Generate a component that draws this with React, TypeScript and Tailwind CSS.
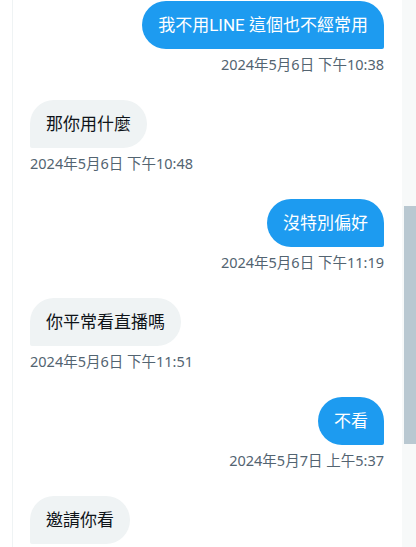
import React from "react";

type Msg = { id: number; mine: boolean; text: string; time: string };

const messages: Msg[] = [
  { id: 1, mine: true, text: "我不用LINE 這個也不經常用", time: "2024年5月6日 下午10:38" },
  { id: 2, mine: false, text: "那你用什麼", time: "2024年5月6日 下午10:48" },
  { id: 3, mine: true, text: "沒特別偏好", time: "2024年5月6日 下午11:19" },
  { id: 4, mine: false, text: "你平常看直播嗎", time: "2024年5月6日 下午11:51" },
  { id: 5, mine: true, text: "不看", time: "2024年5月7日 上午5:37" },
  { id: 6, mine: false, text: "邀請你看", time: "" },
];

function Bubble({ msg }: { msg: Msg }) {
  return (
    <div className={`flex flex-col pb-[26px] ${msg.mine ? "items-end" : "items-start"}`}>
      <div
        className={`px-4 py-3 text-[17px] leading-6 rounded-3xl font-[Roboto,Noto_Sans_CJK_TC,sans-serif] ${
          msg.mine
            ? "bg-[#1d9bf0] text-white rounded-br-[2px]"
            : "bg-[#eff3f4] text-[#0f1419] rounded-bl-[2px]"
        }`}
      >
        {msg.text}
      </div>
      {msg.time && (
        <div className="mt-[5px] h-5 text-[14.5px] leading-5 text-[#536471]">{msg.time}</div>
      )}
    </div>
  );
}

export default function App() {
  return (
    <div className="flex h-[547px] w-[416px] overflow-hidden bg-white font-[Noto_Sans,Noto_Sans_CJK_TC,sans-serif]">
      <div className="w-3 shrink-0" />
      <div className="flex-1 border-l border-[#eff3f4] pl-[17px] pr-[18px] pt-px">
        {messages.map((m) => (
          <Bubble key={m.id} msg={m} />
        ))}
      </div>
      {/* scrollbar */}
      <div className="w-[14px] shrink-0 bg-[#f7f9f9] pl-[2px]">
        <div className="mt-[206px] h-[238px] bg-[#b9c8d1]" />
      </div>
    </div>
  );
}
